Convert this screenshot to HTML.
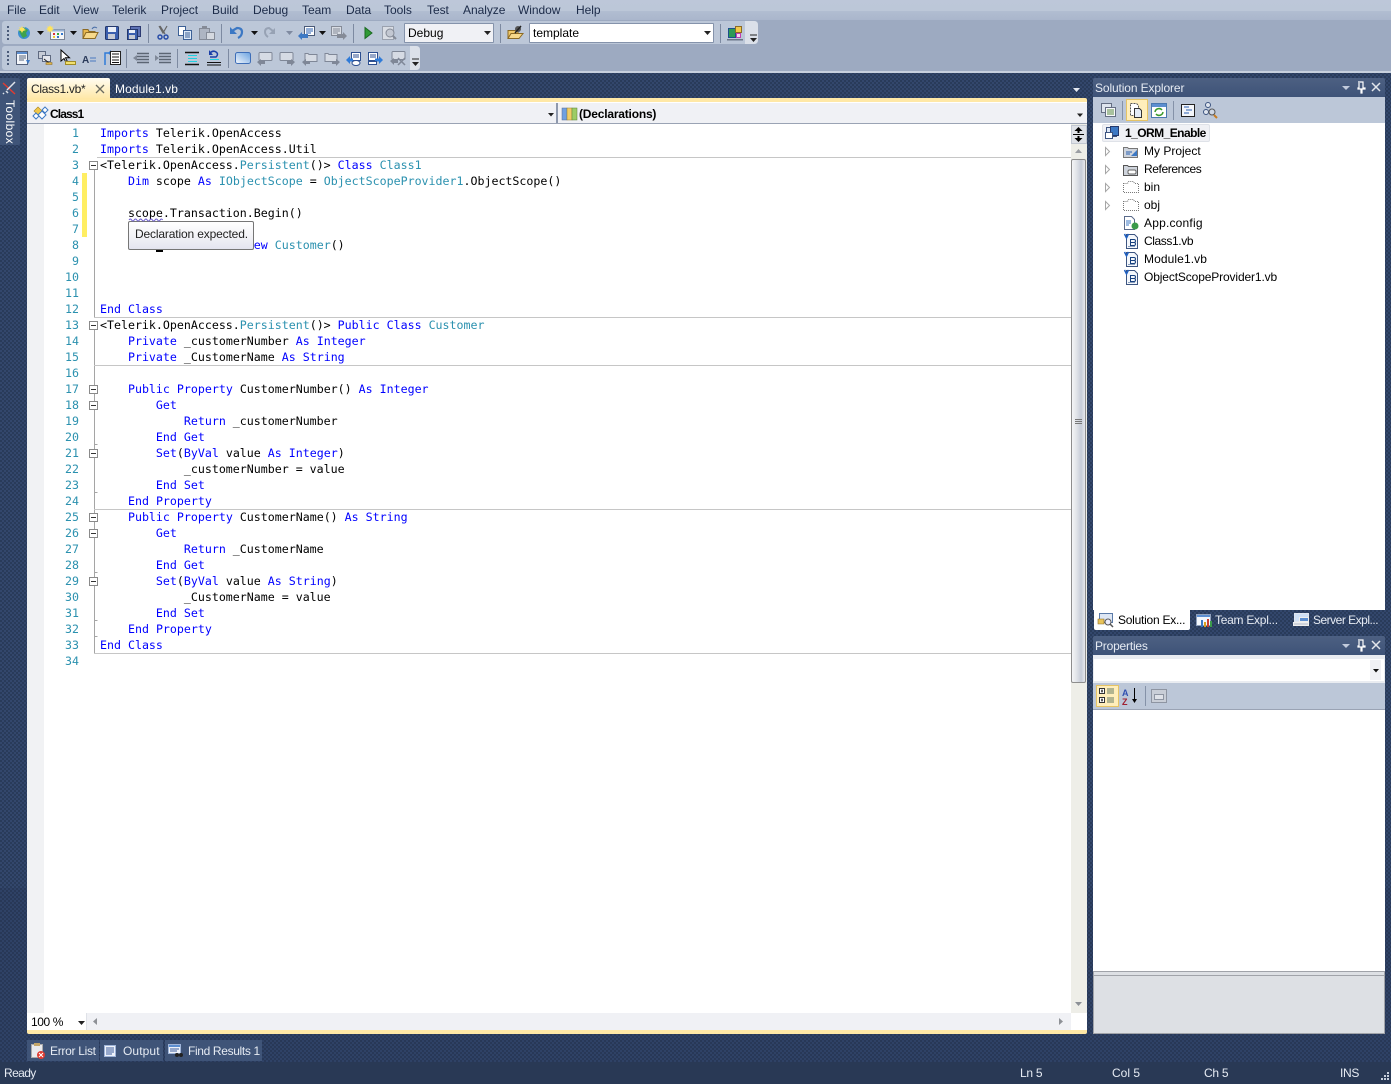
<!DOCTYPE html>
<html><head><meta charset="utf-8"><title>Visual Studio</title>
<style>
html,body{margin:0;padding:0;width:1391px;height:1084px;overflow:hidden;background:#293955}
body{position:relative;font-family:"Liberation Sans",sans-serif;font-size:12px;color:#000}
div,span{box-sizing:border-box}
.a{position:absolute}
.t{position:absolute;white-space:pre;line-height:16px;height:16px}
.dith{background-color:#2c3e5e;background-image:repeating-conic-gradient(#33476c 0 25%,#293b5a 0 50%);background-size:4px 4px}
.m{position:absolute;top:2px;line-height:16px;color:#1b2a48;white-space:pre;letter-spacing:-.05px}
.c{position:absolute;left:100px;font:11.625px/16px "DejaVu Sans Mono",monospace;white-space:pre;height:16px;color:#000}
.n{position:absolute;left:50px;width:29px;text-align:right;font:11.625px/16px "DejaVu Sans Mono",monospace;color:#2b91af;height:16px}
b.k,.k{color:#0000ff;font-weight:normal}
.y{color:#2b91af}
.sep{position:absolute;height:1px;left:97px;width:974px;background:#c6c6c6}
.tree{position:absolute;left:1144px;line-height:16px;color:#000;white-space:pre}
.w{color:#fff;position:absolute;white-space:pre;line-height:16px}
</style></head><body>
<div class="a dith" style="left:0;top:72px;width:1391px;height:816px"></div>
<div class="a" style="left:0;top:888px;width:1391px;height:174px;background-color:#293a5a;background-image:repeating-conic-gradient(#2f4266 0 25%,#283857 0 50%);background-size:4px 4px"></div>
<div class="a" style="left:0;top:1062px;width:1391px;height:22px;background:#293955"></div>

<!-- chrome top -->
<div class="a" style="left:0;top:0;width:1391px;height:20px;background:linear-gradient(#bdc7d9 0,#bcc7d8 55%,#b1bdd1 56%,#aab6cc 100%)"></div>
<div class="a" style="left:0;top:20px;width:1391px;height:51px;background:#9daac1"></div>
<div class="a" style="left:0;top:71px;width:1391px;height:2px;background:#c7d0de"></div>
<div class="a" style="left:2px;top:21px;width:756px;height:23px;background:#bcc7d8;border-radius:3px"></div>
<div class="a" style="left:745px;top:21px;width:13px;height:23px;background:#dbe0e9;border-radius:0 4px 4px 0"></div>
<div class="a" style="left:2px;top:46px;width:418px;height:24px;background:#bcc7d8;border-radius:3px"></div>
<div class="a" style="left:410px;top:46px;width:10px;height:24px;background:#dbe0e9;border-radius:0 4px 4px 0"></div>

<span class="m" style="left:7px">File</span><span class="m" style="left:39px">Edit</span><span class="m" style="left:73px">View</span><span class="m" style="left:112px">Telerik</span><span class="m" style="left:161px">Project</span><span class="m" style="left:212px">Build</span><span class="m" style="left:253px">Debug</span><span class="m" style="left:302px">Team</span><span class="m" style="left:346px">Data</span><span class="m" style="left:384px">Tools</span><span class="m" style="left:427px">Test</span><span class="m" style="left:463px">Analyze</span><span class="m" style="left:518px">Window</span><span class="m" style="left:576px">Help</span>

<div class="a" style="left:404px;top:23px;width:90px;height:20px;background:#f0f1f5;border:1px solid #8593ab;border-radius:1px"></div>
<div class="t" style="left:408px;top:25px">Debug</div>
<div class="a" style="left:529px;top:23px;width:185px;height:20px;background:#fff;border:1px solid #8593ab;border-radius:1px"></div>
<div class="t" style="left:533px;top:25px">template</div>

<!-- left toolbox -->
<div class="a" style="left:0;top:78px;width:20px;height:67px;background:#3f5478;border-radius:0 2px 2px 0"></div>
<div class="t" style="left:-13px;top:115px;width:46px;text-align:left;color:#fff;letter-spacing:.4px;transform:rotate(90deg);transform-origin:50% 50%">Toolbox</div>

<!-- document tabs -->
<div class="a" style="left:27px;top:78px;width:83px;height:21px;background:linear-gradient(#fffcf2,#fff3cf 45%,#ffe8a6);border-radius:2px 2px 0 0"></div>
<div class="t" style="left:31px;top:81px;color:#222;letter-spacing:-.3px">Class1.vb*</div>
<div class="t" style="left:115px;top:81px;color:#fff;letter-spacing:.1px">Module1.vb</div>
<div class="a" style="left:27px;top:98px;width:1060px;height:4px;background:#ffe8a6;border-radius:2px 2px 0 0"></div>

<!-- nav bar -->
<div class="a" style="left:27px;top:102px;width:1060px;height:22px;background:#f0f1f5;border-top:1px solid #fff;border-bottom:1px solid #9aa3b4"></div>
<div class="a" style="left:556px;top:103px;width:2px;height:20px;background:#8f99ad"></div>
<div class="t" style="left:50px;top:106px;font-weight:bold;letter-spacing:-.9px">Class1</div>
<div class="t" style="left:579px;top:106px;font-weight:bold;letter-spacing:-.2px">(Declarations)</div>

<!-- editor -->
<div class="a" style="left:27px;top:124px;width:1044px;height:889px;background:#fff"></div>
<div class="a" style="left:27px;top:124px;width:17px;height:889px;background:#f1f2f4"></div>
<div class="a" style="left:82px;top:173px;width:5px;height:64px;background:#ffee62"></div>
<div class="a" style="left:94px;top:165px;width:1px;height:152px;background:#a5a5a5"></div>
<div class="a" style="left:94px;top:325px;width:1px;height:328px;background:#a5a5a5"></div>
<div class="sep" style="top:157px"></div><div class="sep" style="top:317px;left:94px;width:977px"></div><div class="sep" style="top:365px;left:94px;width:977px"></div><div class="sep" style="top:509px;left:94px;width:977px"></div><div class="sep" style="top:653px;left:94px;width:977px"></div>

<div class="n" style="top:125px">1</div><div class="n" style="top:141px">2</div><div class="n" style="top:157px">3</div><div class="n" style="top:173px">4</div><div class="n" style="top:189px">5</div><div class="n" style="top:205px">6</div><div class="n" style="top:221px">7</div><div class="n" style="top:237px">8</div><div class="n" style="top:253px">9</div><div class="n" style="top:269px">10</div><div class="n" style="top:285px">11</div><div class="n" style="top:301px">12</div><div class="n" style="top:317px">13</div><div class="n" style="top:333px">14</div><div class="n" style="top:349px">15</div><div class="n" style="top:365px">16</div><div class="n" style="top:381px">17</div><div class="n" style="top:397px">18</div><div class="n" style="top:413px">19</div><div class="n" style="top:429px">20</div><div class="n" style="top:445px">21</div><div class="n" style="top:461px">22</div><div class="n" style="top:477px">23</div><div class="n" style="top:493px">24</div><div class="n" style="top:509px">25</div><div class="n" style="top:525px">26</div><div class="n" style="top:541px">27</div><div class="n" style="top:557px">28</div><div class="n" style="top:573px">29</div><div class="n" style="top:589px">30</div><div class="n" style="top:605px">31</div><div class="n" style="top:621px">32</div><div class="n" style="top:637px">33</div><div class="n" style="top:653px">34</div>

<div class="c" style="top:125px"><span class="k">Imports</span> Telerik.OpenAccess</div>
<div class="c" style="top:141px"><span class="k">Imports</span> Telerik.OpenAccess.Util</div>
<div class="c" style="top:157px">&lt;Telerik.OpenAccess.<span class="y">Persistent</span>()&gt; <span class="k">Class</span> <span class="y">Class1</span></div>
<div class="c" style="top:173px">    <span class="k">Dim</span> scope <span class="k">As</span> <span class="y">IObjectScope</span> = <span class="y">ObjectScopeProvider1</span>.ObjectScope()</div>
<div class="c" style="top:205px">    scope.Transaction.Begin()</div>
<div class="c" style="top:237px">                      <span class="k">ew</span> <span class="y">Customer</span>()</div>
<div class="c" style="top:301px"><span class="k">End</span> <span class="k">Class</span></div>
<div class="c" style="top:317px">&lt;Telerik.OpenAccess.<span class="y">Persistent</span>()&gt; <span class="k">Public</span> <span class="k">Class</span> <span class="y">Customer</span></div>
<div class="c" style="top:333px">    <span class="k">Private</span> _customerNumber <span class="k">As</span> <span class="k">Integer</span></div>
<div class="c" style="top:349px">    <span class="k">Private</span> _CustomerName <span class="k">As</span> <span class="k">String</span></div>
<div class="c" style="top:381px">    <span class="k">Public</span> <span class="k">Property</span> CustomerNumber() <span class="k">As</span> <span class="k">Integer</span></div>
<div class="c" style="top:397px">        <span class="k">Get</span></div>
<div class="c" style="top:413px">            <span class="k">Return</span> _customerNumber</div>
<div class="c" style="top:429px">        <span class="k">End</span> <span class="k">Get</span></div>
<div class="c" style="top:445px">        <span class="k">Set</span>(<span class="k">ByVal</span> value <span class="k">As</span> <span class="k">Integer</span>)</div>
<div class="c" style="top:461px">            _customerNumber = value</div>
<div class="c" style="top:477px">        <span class="k">End</span> <span class="k">Set</span></div>
<div class="c" style="top:493px">    <span class="k">End</span> <span class="k">Property</span></div>
<div class="c" style="top:509px">    <span class="k">Public</span> <span class="k">Property</span> CustomerName() <span class="k">As</span> <span class="k">String</span></div>
<div class="c" style="top:525px">        <span class="k">Get</span></div>
<div class="c" style="top:541px">            <span class="k">Return</span> _CustomerName</div>
<div class="c" style="top:557px">        <span class="k">End</span> <span class="k">Get</span></div>
<div class="c" style="top:573px">        <span class="k">Set</span>(<span class="k">ByVal</span> value <span class="k">As</span> <span class="k">String</span>)</div>
<div class="c" style="top:589px">            _CustomerName = value</div>
<div class="c" style="top:605px">        <span class="k">End</span> <span class="k">Set</span></div>
<div class="c" style="top:621px">    <span class="k">End</span> <span class="k">Property</span></div>
<div class="c" style="top:637px"><span class="k">End</span> <span class="k">Class</span></div>

<div class="a" style="left:156px;top:250px;width:7px;height:2px;background:#000"></div>
<!-- tooltip -->
<div class="a" style="left:128px;top:221px;width:126px;height:29px;background:linear-gradient(#fff,#f3f3f7 50%,#e4e5f0);border:1px solid #767676;border-radius:2px"></div>
<div class="t" style="left:135px;top:226px;color:#222;letter-spacing:-.15px">Declaration expected.</div>

<!-- v scrollbar -->
<div class="a" style="left:1071px;top:124px;width:16px;height:889px;background:#eeeee8"></div>
<div class="a" style="left:1071px;top:125px;width:16px;height:19px;background:#dfe2e8;border:1px solid #c2c8d2"></div>
<div class="a" style="left:1071px;top:159px;width:15px;height:524px;background:linear-gradient(90deg,#f4f5f7,#e1e4e9 35%,#c6ccd8 70%,#e6e8ec);border:1px solid #8d8d8d;border-radius:2px"></div>
<!-- h scroll -->
<div class="a" style="left:27px;top:1013px;width:1044px;height:17px;background:#f0f1f5"></div>
<div class="a" style="left:1071px;top:1013px;width:16px;height:17px;background:#fff"></div>
<div class="a" style="left:27px;top:1013px;width:60px;height:17px;background:#fff;border-right:1px solid #dfe2e8"></div>
<div class="t" style="left:31px;top:1014px;letter-spacing:-.4px">100 %</div>
<div class="a" style="left:27px;top:1030px;width:1060px;height:4px;background:#ffe8a6;border-radius:0 0 2px 2px"></div>

<!-- Solution explorer -->
<div class="a" style="left:1093px;top:78px;width:292px;height:19px;background:linear-gradient(#4d6082,#3e5378);border-radius:2px 2px 0 0"></div>
<div class="w" style="left:1095px;top:80px;color:#e6ebf3;letter-spacing:-.12px">Solution Explorer</div>
<div class="a" style="left:1093px;top:97px;width:292px;height:26px;background:#bcc7d8"></div>
<div class="a" style="left:1126px;top:99px;width:22px;height:22px;background:#ffeebb;border:1px solid #e5c365"></div>
<div class="a" style="left:1093px;top:123px;width:292px;height:487px;background:#fff"></div>
<div class="a" style="left:1102px;top:124px;width:108px;height:18px;background:#f0f1f5;border:1px solid #dfe2e8;border-radius:2px"></div>
<div class="t" style="left:1125px;top:125px;font-weight:bold;letter-spacing:-.55px">1_ORM_Enable</div>
<div class="tree" style="top:143px">My Project</div><div class="tree" style="top:161px;letter-spacing:-.4px">References</div><div class="tree" style="top:179px">bin</div><div class="tree" style="top:197px">obj</div><div class="tree" style="top:215px;letter-spacing:.2px">App.config</div><div class="tree" style="top:233px;letter-spacing:-.4px">Class1.vb</div><div class="tree" style="top:251px;letter-spacing:.1px">Module1.vb</div><div class="tree" style="top:269px;letter-spacing:-.13px">ObjectScopeProvider1.vb</div>

<div class="a" style="left:1094px;top:610px;width:96px;height:20px;background:#fff;border-radius:0 0 2px 2px"></div>
<div class="t" style="left:1118px;top:612px;letter-spacing:-.25px">Solution Ex...</div>
<div class="w" style="left:1215px;top:612px;color:#e6ebf3;letter-spacing:-.27px">Team Expl...</div>
<div class="w" style="left:1313px;top:612px;color:#e6ebf3;letter-spacing:-.5px">Server Expl...</div>

<!-- Properties -->
<div class="a" style="left:1093px;top:636px;width:292px;height:19px;background:linear-gradient(#4d6082,#3e5378);border-radius:2px 2px 0 0"></div>
<div class="w" style="left:1095px;top:638px;color:#e6ebf3;letter-spacing:-.2px">Properties</div>
<div class="a" style="left:1093px;top:655px;width:292px;height:28px;background:#e9ecf1"></div>
<div class="a" style="left:1094px;top:659px;width:290px;height:22px;background:#fff"></div>
<div class="a" style="left:1370px;top:660px;width:11px;height:20px;background:#f0f1f5"></div>
<div class="a" style="left:1093px;top:683px;width:292px;height:27px;background:#bcc7d8;border-bottom:1px solid #9aa3b4"></div>
<div class="a" style="left:1096px;top:685px;width:23px;height:22px;background:#ffeebb;border:1px solid #e5c365"></div>
<div class="a" style="left:1093px;top:710px;width:292px;height:261px;background:#fff"></div>
<div class="a" style="left:1093px;top:971px;width:292px;height:63px;background:#dde0e4;border:1px solid #a0a3a9;border-top:1px solid #a0a3a9"></div>
<div class="a" style="left:1093px;top:975px;width:292px;height:1px;background:#a0a3a9"></div>

<!-- bottom tabs -->
<div class="a" style="left:27px;top:1040px;width:72px;height:21px;background:#3f5478"></div>
<div class="a" style="left:100px;top:1040px;width:63px;height:21px;background:#3f5478"></div>
<div class="a" style="left:165px;top:1040px;width:97px;height:21px;background:#3f5478"></div>
<div class="w" style="left:50px;top:1043px;color:#e6ebf3;letter-spacing:-.3px">Error List</div>
<div class="w" style="left:123px;top:1043px;color:#e6ebf3;letter-spacing:.1px">Output</div>
<div class="w" style="left:188px;top:1043px;color:#e6ebf3;letter-spacing:-.35px">Find Results 1</div>
<div class="w" style="left:4px;top:1065px;color:#e6ebf3;letter-spacing:-.6px">Ready</div>
<div class="w" style="left:1020px;top:1065px;color:#e6ebf3;letter-spacing:-.25px">Ln 5</div>
<div class="w" style="left:1112px;top:1065px;color:#e6ebf3">Col 5</div>
<div class="w" style="left:1204px;top:1065px;color:#e6ebf3;letter-spacing:-.25px">Ch 5</div>
<div class="w" style="left:1340px;top:1065px;color:#e6ebf3;letter-spacing:-.3px">INS</div>

<!-- all icons -->
<svg class="a" style="left:0;top:0" width="1391" height="1084" viewBox="0 0 1391 1084">
<defs>
<path id="dd" d="M0 0h7l-3.5 4z" fill="#111"/>
<path id="ddg" d="M0 0h7l-3.5 4z" fill="#7f8aa0"/>
<g id="grip" fill="#4a5a78"><rect x="0" y="0" width="2" height="2"/><rect x="0" y="4" width="2" height="2"/><rect x="0" y="8" width="2" height="2"/><rect x="0" y="12" width="2" height="2"/></g>
<g id="vb"><path d="M2.500 .5h8l3 3v11h-11z" fill="#f4f7fb" stroke="#3c5480"/><path d="M6.500 5.500h3.500q1.500 0 1.500 1.500t-1.500 1.500h-3.500zM6.500 8.500h3.500q1.500 0 1.500 1.500t-1.500 1.500h-3.500z" fill="none" stroke="#17407e"/><path d="M4 12.500h7" stroke="#8aa0c0"/><path d="M.5 0l2 4 2-4" stroke="#2060c0" stroke-width="1.500" fill="none"/></g>
<g id="fold"><path d="M.5 3.500h4l1-2h5l1 2h4v9h-15z" fill="#fff" stroke="#777" stroke-dasharray="1 1"/></g>
<g id="over"><path d="M0 0h7" stroke="#222"/><path d="M0 3h7l-3.500 4z" fill="#222"/></g>
<g id="pin"><path d="M3 0h5v6h2v1h-3v4h-1v-4h-3v-1h1v-5" fill="none" stroke="#fff" stroke-width="1.200"/></g>
<g id="x"><path d="M0 0l8 8M8 0l-8 8" stroke="#fff" stroke-width="1.500" opacity=".85"/></g>
<g id="box"><rect x=".5" y=".5" width="8" height="8" fill="#fff" stroke="#8a8a8a"/><path d="M2 4.500h5" stroke="#333"/></g>
<path id="tri" d="M.5 .5l4 4-4 4z" fill="#fff" stroke="#a6a6a6"/>
<g id="bub"><path d="M3 1.500h11a1 1 0 0 1 1 1v6a1 1 0 0 1-1 1h-11a1 1 0 0 1-1-1v-6a1 1 0 0 1 1-1z" fill="#d6dbe4" stroke="#7f8797"/><path d="M0 11l4-3v2h4v3h-4v2z" fill="#7f8797"/></g>
<g id="lines"><path d="M0 .5h12M0 3.500h12M0 6.500h12M0 9.500h12" stroke="#5c6674" stroke-width="1.500"/></g>
<linearGradient id="bl" x1="0" y1="1" x2="1" y2="0"><stop offset="0" stop-color="#f4f7fc"/><stop offset="1" stop-color="#6aa2e0"/></linearGradient>
</defs>

<!-- grips -->
<use href="#grip" x="7" y="26"/><use href="#grip" x="7" y="51"/>
<!-- toolbar 1 -->
<circle cx="24" cy="33" r="6" fill="#3c8fd0"/><path d="M19 31l5-3 4 2-2 3 1 3-4 2-2-3z" fill="#3fa34d"/><path d="M19 27l2 1 1-2 1 2 2-1-1 2 2 1-3 1-1 2-1-2-3-1 2-1z" fill="#ffe45c"/>
<use href="#dd" x="37" y="31"/>
<rect x="50.500" y="29.500" width="14" height="10" fill="#f5f6f8" stroke="#7a8394"/><rect x="50.500" y="29.500" width="14" height="2" fill="#9ab4d8"/><rect x="53" y="33" width="2" height="2" fill="#d33"/><rect x="57" y="33" width="2" height="2" fill="#3a3"/><rect x="61" y="33" width="2" height="2" fill="#37c"/><rect x="53" y="36" width="2" height="2" fill="#ec3"/><rect x="57" y="36" width="2" height="2" fill="#37c"/><path d="M50 25l1 2 2-1-1 2 2 1-2 1 1 2-2-1-1 2-1-2-2 1 1-2-2-1 2-1-1-2 2 1z" fill="#ffe45c"/>
<use href="#dd" x="70" y="31"/>
<path d="M83 29.500h5l1 2h6v7h-12z" fill="#e8b84e" stroke="#8c6a24"/><path d="M83 38.500l3-6h12l-3 6z" fill="#f7d98b" stroke="#8c6a24"/><path d="M92 29q2-3 5-1" stroke="#4a6fa8" fill="none"/>
<rect x="105.500" y="26.500" width="13" height="13" rx="1" fill="#3b5fae" stroke="#24386c"/><rect x="108" y="27" width="8" height="5" fill="#e9eef7"/><rect x="108" y="34" width="7" height="5" fill="#c7cbd4"/>
<rect x="130.500" y="26.500" width="10" height="10" fill="#5d72b5" stroke="#2c3a72"/><rect x="127.500" y="29.500" width="10" height="10" fill="#3b5fae" stroke="#24386c"/><rect x="129" y="30" width="6" height="3" fill="#e9eef7"/><rect x="129" y="35" width="6" height="4" fill="#c7cbd4"/>
<rect x="148" y="24" width="1" height="19" fill="#7d8aa1"/>
<path d="M159 26l4 7 4-7M160 26l5 8" stroke="#666" stroke-width="1.200" fill="none"/><circle cx="160" cy="37" r="2" fill="none" stroke="#2a4ea8" stroke-width="1.500"/><circle cx="166" cy="37" r="2" fill="none" stroke="#2a4ea8" stroke-width="1.500"/>
<path d="M178.500 26.500h7v9h-7z" fill="#fff" stroke="#3c6096"/><path d="M183.500 30.500h8v9h-8z" fill="#dce9f8" stroke="#3c6096"/><path d="M185 33h5M185 35h5M185 37h5" stroke="#3c6096"/>
<rect x="199.500" y="28.500" width="10" height="11" fill="#aeb5c2" stroke="#858b97"/><rect x="202" y="26" width="5" height="3" fill="#858b97"/><rect x="206.500" y="32.500" width="8" height="7" fill="#d5d9e0" stroke="#858b97"/>
<rect x="221" y="24" width="1" height="19" fill="#7d8aa1"/>
<path d="M232 31l5-3q5 0 5 4 0 4-4 6" stroke="#3c78c4" stroke-width="2.200" fill="none"/><path d="M230 27v7h7z" fill="#3c78c4"/>
<use href="#dd" x="251" y="31"/>
<path d="M273 31l-4-3q-4 0-4 4 0 3 3 5" stroke="#97a2b4" stroke-width="2" fill="none"/><path d="M275 28v6h-6z" fill="#97a2b4"/>
<use href="#ddg" x="286" y="31"/>
<rect x="304.500" y="26.500" width="10" height="9" fill="#fff" stroke="#4a5a78"/><path d="M306 29h7M306 31h7M306 33h5" stroke="#2a5fb0"/><path d="M298 36l4-4v2h6v4h-6v2z" fill="#3c78c4"/>
<use href="#dd" x="319" y="31"/>
<rect x="331.500" y="26.500" width="10" height="9" fill="#d9dde4" stroke="#858b97"/><path d="M333 29h7M333 31h7M333 33h5" stroke="#858b97"/><path d="M347 36l-4-4v2h-6v4h6v2z" fill="#858b97"/>
<rect x="353" y="24" width="1" height="19" fill="#7d8aa1"/>
<path d="M365 27.500l7 5.500-7 5.500z" fill="#2f9a35" stroke="#1a6a20"/>
<rect x="382.500" y="26.500" width="11" height="13" fill="#d9dde4" stroke="#9aa1ae"/><circle cx="390" cy="33" r="4" fill="#c3c8d2" stroke="#858b97"/><path d="M393 36l3 3" stroke="#858b97" stroke-width="2"/>
<path d="M484 31h7l-3.500 4z" fill="#222"/>
<rect x="500" y="24" width="1" height="19" fill="#7d8aa1"/>
<path d="M508 30.500h10v8h-10z" fill="#f1c96a" stroke="#8c6a24"/><path d="M508 38.500l3-5h12l-4 5z" fill="#f7d98b" stroke="#8c6a24"/><circle cx="518" cy="29" r="3" fill="#555"/><path d="M515 33l6-7" stroke="#222" stroke-width="1.500"/>
<path d="M704 31h7l-3.500 4z" fill="#222"/>
<rect x="720" y="24" width="1" height="19" fill="#7d8aa1"/>
<rect x="728.500" y="28.500" width="7" height="9" fill="#2f9a55" stroke="#1c4f8c"/><rect x="735.500" y="26.500" width="6" height="6" fill="#f1c94a" stroke="#8c6a24"/><rect x="736.500" y="33.500" width="4" height="4" fill="#f7d7f0" stroke="#c040b0"/><rect x="727" y="39" width="16" height="1.500" fill="#6a7487"/>
<use href="#over" x="750" y="35"/>
<!-- toolbar 2 -->
<rect x="16.500" y="51.500" width="11" height="13" fill="#f4f6fa" stroke="#55617a"/><rect x="17" y="52" width="10" height="2" fill="#5c8ed0"/><path d="M19 56h7M19 58h7M19 60h5" stroke="#55617a"/><path d="M26 60h4l-2 4z" fill="#3c78c4"/>
<rect x="38.500" y="51.500" width="7" height="7" fill="#c7ccd6" stroke="#5f6a80"/><rect x="42.500" y="55.500" width="8" height="6" fill="#e4e6ec" stroke="#5f6a80"/><path d="M44 59l5 4" stroke="#222"/><path d="M46 62.500h6v2h-6z" fill="#e0b84a" stroke="#8c6a24" stroke-width=".6"/>
<path d="M61 50v11l3-2.500 2 4 1.500-.7-2-4h4z" fill="#fff" stroke="#000"/><rect x="65.500" y="61.500" width="10" height="3" fill="#f1e070" stroke="#a08c28"/>
<text x="82" y="63" font-family="Liberation Sans,sans-serif" font-size="10" font-weight="bold" fill="#2a3a5a">A</text><path d="M90 58h6M90 61h6" stroke="#4a78c0"/>
<path d="M105 65v-12h6" stroke="#2f7bd8" stroke-width="1.500" fill="none"/><path d="M111 50v6l-3-3z" fill="#2f7bd8"/><rect x="110.500" y="51.500" width="10" height="13" fill="#fff" stroke="#222"/><path d="M112 54h7M112 57h7M112 60h7M112 62.500h7" stroke="#111"/>
<rect x="126" y="49" width="1" height="19" fill="#7d8aa1"/>
<use href="#lines" x="137" y="53"/><path d="M133 58l4-3v6z" fill="#7f8898"/>
<use href="#lines" x="159" y="53"/><path d="M159 58l-4-3v6z" fill="#7f8898"/>
<rect x="177" y="49" width="1" height="19" fill="#7d8aa1"/>
<path d="M185 52.500h14M185 64.500h14" stroke="#111" stroke-width="1.500"/><path d="M188 55.500h9M188 58.500h9M188 61.500h9" stroke="#1fd0e0"/>
<path d="M207 62.500h14M207 65h14" stroke="#111"/><path d="M210 59.500h9" stroke="#1fd0e0"/><path d="M210 53q3-3 6-1 3 2 0 5h-6" stroke="#1a3ea8" stroke-width="1.500" fill="none"/><path d="M209 50v5h4z" fill="#1a3ea8"/>
<rect x="228" y="49" width="1" height="19" fill="#7d8aa1"/>
<rect x="235.500" y="52.500" width="15" height="11" rx="2" fill="url(#bl)" stroke="#3e6eb8"/>
<use href="#bub" x="257" y="51"/>
<g transform="translate(295 51) scale(-1 1)"><use href="#bub"/></g>
<path d="M305 53.500h3l1 1h8v7h-12z" fill="#d6dbe4" stroke="#7f8797"/><path d="M302 62l4-3v2h4v3h-4v2z" fill="#7f8797"/>
<path d="M325 53.500h3l1 1h8v7h-12z" fill="#d6dbe4" stroke="#7f8797"/><path d="M340 62l-4-3v2h-4v3h4v2z" fill="#7f8797"/>
<rect x="351.500" y="52.500" width="9" height="8" fill="#fff" stroke="#2d4f90"/><path d="M353 55h6M353 57h6" stroke="#2d4f90"/><path d="M346 60l4-4v2.500h3v3h-3v2.500z" fill="#2f7bd8"/><ellipse cx="356" cy="63" rx="4" ry="2.500" fill="#fff" stroke="#2d4f90"/>
<rect x="368.500" y="52.500" width="9" height="8" fill="#fff" stroke="#2d4f90"/><path d="M370 55h6M370 57h6" stroke="#2d4f90"/><path d="M383 60l-4-4v2.500h-4v3h4v2.500z" fill="#2f7bd8"/><rect x="368.500" y="61.500" width="8" height="3" fill="#fff" stroke="#2d4f90"/>
<use href="#bub" x="390" y="50"/><path d="M398 58l7 7M405 58l-7 7" stroke="#7f8797" stroke-width="1.500"/>
<use href="#over" x="412" y="59"/>
<!-- doc tab -->
<path d="M96 85l8 8M104 85l-8 8" stroke="#6b6b60" stroke-width="1.300"/>
<path d="M1073 88h7l-3.500 4z" fill="#e6ebf3"/>
<!-- toolbox icon -->
<path d="M3 83l12 11" stroke="#e03c32" stroke-width="1.500"/><path d="M15 82l-8 8M6 91l2 2M4 93l-1 1" stroke="#dfe3ea" stroke-width="1.500"/>
<!-- nav icons -->
<path d="M38 107l4 4-4 4-4-4z" fill="#f2c84a" stroke="#b08a20" stroke-width=".7"/><path d="M42 111l4 4-4 4-4-4z" fill="#fff" stroke="#3c78c4"/><path d="M36 113l3 3-3 3-3-3z" fill="#fff" stroke="#3c78c4"/><path d="M45 107l3 3-3 3-3-3z" fill="#fff" stroke="#3c78c4"/>
<path d="M548 113h6l-3 3.500z" fill="#222"/><path d="M1077 113.500h6l-3 3.500z" fill="#222"/>
<rect x="562" y="108" width="5" height="12" fill="#6fa0e0" stroke="#5a6a90" stroke-width=".5"/><rect x="567" y="108" width="5" height="12" fill="#f1cc66" stroke="#8c7a30" stroke-width=".5"/><rect x="572" y="108" width="5" height="12" fill="#9ccc66" stroke="#5a8030" stroke-width=".5"/>
<!-- outlining -->
<use href="#box" x="89" y="161"/><use href="#box" x="89" y="321"/><use href="#box" x="89" y="385"/><use href="#box" x="89" y="401"/><use href="#box" x="89" y="449"/><use href="#box" x="89" y="513"/><use href="#box" x="89" y="529"/><use href="#box" x="89" y="577"/>
<path d="M94.500 444.500h3M94.500 492.500h3M94.500 572.500h3M94.500 620.500h3M94.500 636.500h3" stroke="#a5a5a5"/>
<path d="M129 220q1.300-2 2.600 0t2.600 0 2.600 0 2.600 0 2.600 0 2.600 0 2.600 0 2.600 0 2.600 0 2.600 0 2.600 0 2.600 0 2.400 0" fill="none" stroke="#6a5acd"/>
<!-- splitter, scroll arrows -->
<path d="M1073 134.500h11" stroke="#000"/><path d="M1078.500 127l-4 4h3v2h2v-2h3zM1078.500 142l-4-4h3v-2h2v2h3z" fill="#000"/>
<path d="M1075 153l3.500-4 3.500 4z" fill="#9b9ea3"/><path d="M1075 1002h7l-3.500 4z" fill="#8c9096"/>
<path d="M1075 419.500h7M1075 421.500h7M1075 423.500h7" stroke="#777"/>
<path d="M78 1021h7l-3.500 4z" fill="#222"/>
<path d="M97 1018v7l-4-3.500z" fill="#8e9196"/><path d="M1059 1018v7l4-3.500z" fill="#8e9196"/>
<!-- SE title icons -->
<path d="M1342 86h8l-4 4z" fill="#c2cbdc"/><use href="#pin" x="1355" y="82"/><use href="#x" x="1372" y="83"/>
<path d="M1342 644h8l-4 4z" fill="#c2cbdc"/><use href="#pin" x="1355" y="640"/><use href="#x" x="1372" y="641"/>
<!-- SE toolbar -->
<rect x="1101.500" y="103.500" width="10" height="9" fill="#dfe5ee" stroke="#646e82"/><rect x="1105.500" y="107.500" width="10" height="9" fill="#f7f8fb" stroke="#646e82"/><path d="M1107 110h7M1107 112h7M1107 114h7" stroke="#5a8a40"/>
<rect x="1122" y="101" width="1" height="19" fill="#8592a8"/>
<path d="M1130.500 103.500h6l2 2v10h-8z" fill="#fff" stroke="#555" stroke-dasharray="2 1"/><path d="M1134.500 108.500h5l2 2v7h-7z" fill="#e4ecf7" stroke="#333"/>
<rect x="1151.500" y="103.500" width="15" height="14" fill="#fff" stroke="#4a78b0"/><rect x="1152" y="104" width="14" height="3" fill="#5c8ed0"/><path d="M1155 112a4 4 0 0 1 7-2M1163 112a4 4 0 0 1-7 2" stroke="#3a9a2a" stroke-width="1.500" fill="none"/>
<rect x="1173" y="101" width="1" height="19" fill="#8592a8"/>
<rect x="1181.500" y="104.500" width="13" height="12" fill="#f4f6fa" stroke="#222"/><path d="M1184 107h5M1186 110h6M1184 113h5" stroke="#2a5fb0"/>
<circle cx="1208" cy="105" r="2.500" fill="#dfe5ee" stroke="#3c5480"/><circle cx="1206" cy="112" r="2.500" fill="#dfe5ee" stroke="#3c5480"/><circle cx="1212" cy="112" r="3" fill="#cfd8e6" stroke="#555"/><path d="M1214 115l3 3" stroke="#c87c20" stroke-width="2"/>
<!-- tree -->
<rect x="1106.500" y="127.500" width="10" height="9" fill="#dfe9f7" stroke="#3c5480"/><rect x="1110.500" y="126.500" width="8" height="9" fill="#3c78c4" stroke="#24386c"/><rect x="1105.500" y="132.500" width="7" height="6" fill="#fff" stroke="#3c5480"/>
<use href="#tri" x="1105" y="147"/><use href="#tri" x="1105" y="165"/><use href="#tri" x="1105" y="183"/><use href="#tri" x="1105" y="201"/>
<path d="M1123.500 147.500h4l1 1h9v9h-14z" fill="#cfd4dc" stroke="#777"/><path d="M1126 152h6M1126 154h4" stroke="#2a5fb0"/><path d="M1131 156l6-6v6z" fill="#3c78c4"/>
<path d="M1123.500 165.500h4l1 1h9v9h-14z" fill="#cfd4dc" stroke="#555"/><rect x="1128" y="170" width="8" height="4" rx="1.500" fill="#fff" stroke="#666"/>
<use href="#fold" x="1123" y="180"/><use href="#fold" x="1123" y="198"/>
<path d="M1124.500 216.500h7l3 3v10h-10z" fill="#fff" stroke="#5a6a8a"/><path d="M1126 221h5M1126 223h5M1126 225h3" stroke="#3c78c4"/><circle cx="1135" cy="226" r="3.500" fill="#3a9a4a"/>
<use href="#vb" x="1124" y="234"/><use href="#vb" x="1124" y="252"/><use href="#vb" x="1124" y="270"/>
<!-- SE tabs -->
<rect x="1099.500" y="613.500" width="13" height="9" fill="#dde6f3" stroke="#5a7aa8"/><path d="M1098 619h6v5h-6z" fill="#e8c35a" stroke="#8c6a24" stroke-width=".6"/><circle cx="1108" cy="622" r="3" fill="#eef" stroke="#555"/><path d="M1110 624l3 3" stroke="#555" stroke-width="1.500"/>
<rect x="1196.500" y="614.500" width="14" height="11" fill="#f2f6fc" stroke="#8fa0bc"/><rect x="1197" y="615" width="13" height="2" fill="#5c8ed0"/><rect x="1201" y="620" width="2" height="7" fill="#3c78c4"/><rect x="1204" y="622" width="2" height="5" fill="#d9a020"/><rect x="1207" y="619" width="2" height="8" fill="#c84030"/><rect x="1210" y="621" width="2" height="6" fill="#3a9a4a"/>
<rect x="1294.500" y="613.500" width="14" height="8" fill="#cfe0f5" stroke="#dfe6f0"/><rect x="1299.500" y="617.500" width="9" height="4" fill="#5c8ed0" stroke="#eee"/><rect x="1293.500" y="622.500" width="15" height="3" fill="#d0d4dc" stroke="#eee"/>
<!-- properties -->
<path d="M1373 669h6l-3 3.500z" fill="#111"/>
<rect x="1099.500" y="688.500" width="5" height="5" fill="#fff" stroke="#333"/><rect x="1099.500" y="697.500" width="5" height="5" fill="#fff" stroke="#333"/><path d="M1101 691h2M1101 700h2M1102 689.500v3M1102 698.500v3" stroke="#222"/><path d="M1107 689h7M1107 691h7M1107 693h7M1107 698h7M1107 700h7M1107 702h7" stroke="#667a66"/>
<text x="1122" y="696" font-family="Liberation Sans,sans-serif" font-size="9" font-weight="bold" fill="#3050b0">A</text><text x="1122" y="705" font-family="Liberation Sans,sans-serif" font-size="9" font-weight="bold" fill="#a02030">Z</text><path d="M1134.500 688v14" stroke="#000"/><path d="M1132 699h5l-2.500 4z" fill="#000"/>
<rect x="1145" y="686" width="1" height="20" fill="#8592a8"/>
<rect x="1151.500" y="689.500" width="15" height="13" fill="#c9ced7" stroke="#8e95a2"/><rect x="1154.500" y="694.500" width="9" height="5" fill="#dfe2e8" stroke="#8e95a2"/>
<!-- bottom tabs -->
<rect x="31.500" y="1044.500" width="11" height="13" fill="#e9eaee" stroke="#aaa"/><rect x="34" y="1043" width="6" height="3" fill="#c4a66a"/><circle cx="41" cy="1055" r="4" fill="#e03c32"/><path d="M39 1053l4 4M43 1053l-4 4" stroke="#fff"/>
<rect x="104.500" y="1045.500" width="11" height="11" fill="#eef2fa" stroke="#9fb4d8"/><path d="M106 1048h8M106 1050h8M106 1052h8M106 1054h6" stroke="#3f5f9c"/>
<rect x="168.500" y="1044.500" width="12" height="9" fill="#eef2fa" stroke="#9fb4d8"/><rect x="169" y="1045" width="11" height="2" fill="#5c8ed0"/><path d="M170 1049h9M170 1051h7" stroke="#3f5f9c"/><circle cx="177" cy="1055" r="2" fill="#222"/><circle cx="181" cy="1055" r="2" fill="#222"/>
<!-- grip -->
<g fill="#c6cfdd"><rect x="1387" y="1072" width="2" height="2"/><rect x="1384" y="1075" width="2" height="2"/><rect x="1387" y="1075" width="2" height="2"/><rect x="1381" y="1078" width="2" height="2"/><rect x="1384" y="1078" width="2" height="2"/><rect x="1387" y="1078" width="2" height="2"/></g>
</svg>
</body></html>
